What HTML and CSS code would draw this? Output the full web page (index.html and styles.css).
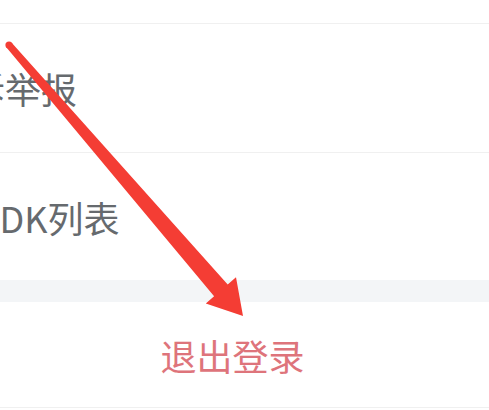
FILE: index.html
```html
<!DOCTYPE html>
<html lang="zh-CN">
<head>
<meta charset="UTF-8">
<title>设置</title>
<link rel="stylesheet" href="styles.css">
</head>
<body>

  <div class="settings">
    <div class="stub"></div>

    <div class="row">
      <span class="label label-report">投诉举报</span>
    </div>

    <div class="row row-last">
      <span class="label label-sdk">第三方SDK列表</span>
    </div>

    <div class="gap"></div>

    <div class="logout">退出登录</div>
  </div>

  <!-- 标注箭头 -->
  <svg class="arrow" width="489" height="410" viewBox="0 0 489 410">
    <circle cx="9" cy="45" r="3.6" fill="#f43d34"/>
    <polygon fill="#f43d34" points="11.7,42.7 227.7,284.4 236,277.2 243,316 205.8,303.4 214.1,296.2 6.3,47.3"/>
  </svg>

</body>
</html>
```

FILE: styles.css
```css
:root {
  --linea: #f0f0f0;
  --gris-texto: #666a6e;
  --rojo-suave: #de747b;
  --banda: #f3f5f7;
}
html,body {
  margin: 0;
  padding: 0;
  background: #fff;
  font-family: "Noto Sans CJK SC", "Noto Sans", sans-serif;
  overflow: hidden;
}
.settings {
  display: flex;
  flex-direction: column;
  width: 489px;
}
.stub {
  height: 23px;
  border-bottom: 1px solid var(--linea);
}
.row {
  height: 128px;
  display: flex;
  align-items: center;
  border-bottom: 1px solid var(--linea);
  overflow: hidden;
  white-space: nowrap;
}
.row-last {
  height: 127px;
  border-bottom: none;
}
.label {
  font-size: 36px;
  color: var(--gris-texto);
}
.label-report {
  margin-left: -67px;
}
.label-sdk {
  margin-left: -130px;
}
.gap {
  height: 22px;
  background: var(--banda);
}
.logout {
  height: 105px;
  display: flex;
  align-items: center;
  justify-content: center;
  padding-right: 24px;
  font-size: 36px;
  color: var(--rojo-suave);
  border-bottom: 1px solid var(--linea);
}
.arrow {
  position: absolute;
  top: 0;
  left: 0;
  pointer-events: none;
}
```
